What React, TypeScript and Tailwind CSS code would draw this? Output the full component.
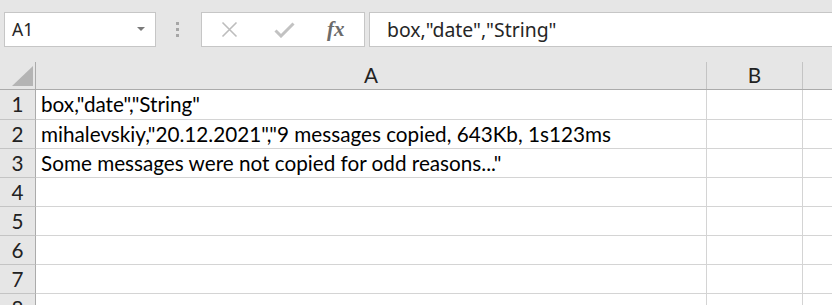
import React from "react";

// ─── Data ─────────────────────────────────────────────────────────────────────

const rows: { n: number; a: string }[] = [
    { n: 1, a: 'box,"date","String"' },
    { n: 2, a: 'mihalevskiy,"20.12.2021","9 messages copied, 643Kb, 1s123ms' },
    { n: 3, a: 'Some messages were not copied for odd reasons..."' },
    { n: 4, a: "" },
    { n: 5, a: "" },
    { n: 6, a: "" },
    { n: 7, a: "" },
    { n: 8, a: "" },
];

const cellFont = { fontFamily: "Lato, 'Liberation Sans', sans-serif" };

// ─── Formula bar ──────────────────────────────────────────────────────────────

function FormulaBar() {
    return (
        <div className="flex h-[62px] shrink-0 items-start pt-[12px] font-['Noto_Sans',sans-serif]">
            <div className="ml-[4px] flex h-[35px] w-[152px] items-center justify-between border border-[#c6c6c6] bg-white pl-[7px] pr-[10px]">
                <span className="text-[17.5px] text-[#262626]">A1</span>
                <svg width="8" height="5" viewBox="0 0 8 5">
                    <path d="M0 0h8L4 4z" fill="#7a7a7a" />
                </svg>
            </div>

            <div className="flex h-[35px] w-[45px] flex-col items-start justify-center gap-[3px] pl-[20px]">
                <div className="h-[3px] w-[3px] bg-[#a6a6a6]" />
                <div className="h-[3px] w-[3px] bg-[#a6a6a6]" />
                <div className="h-[3px] w-[3px] bg-[#a6a6a6]" />
            </div>

            <div className="flex h-[35px] w-[164px] items-center border border-[#c6c6c6] bg-white">
                <svg className="ml-[19px]" width="17" height="17" viewBox="0 0 17 17">
                    <path d="M1.5 1.5l14 14M15.5 1.5l-14 14" stroke="#bdbdbd" strokeWidth="1.6" />
                </svg>
                <svg className="ml-[36px]" width="21" height="16" viewBox="0 0 21 16">
                    <path d="M1.5 8.5l5.5 5.5L19.5 1.5" stroke="#c2c2c2" strokeWidth="3" fill="none" />
                </svg>
                <span className="ml-[32px] font-['Liberation_Serif',serif] text-[21px] font-bold italic leading-none text-[#6b6b6b]">
                    fx
                </span>
            </div>

            <div className="ml-[4px] flex h-[35px] flex-1 items-center border-y border-l border-[#c6c6c6] bg-white pl-[17px]">
                <span className="text-[19.4px] text-[#262626]">box,"date","String"</span>
            </div>
        </div>
    );
}

// ─── Grid ─────────────────────────────────────────────────────────────────────

function ColumnHeaders() {
    return (
        <div className="flex h-[28px] shrink-0 border-b border-[#ababab]" style={cellFont}>
            <div className="relative w-[36px] shrink-0 border-r border-[#ababab]">
                <svg className="absolute left-[12px] top-[4px]" width="21" height="20" viewBox="0 0 21 20">
                    <path d="M21 0V20H0z" fill="#b4b4b4" />
                </svg>
            </div>
            <div className="flex w-[671px] shrink-0 items-center justify-center border-r border-[#c4c4c4] text-[20.7px] text-[#222]">
                A
            </div>
            <div className="flex w-[96px] shrink-0 items-center justify-center border-r border-[#c4c4c4] text-[20.7px] text-[#222]">
                B
            </div>
            <div className="flex-1" />
        </div>
    );
}

function Row({ n, a }: { n: number; a: string }) {
    const h = n === 1 ? "h-[30px]" : "h-[29px]";
    return (
        <div className={`flex ${h} shrink-0`} style={cellFont}>
            <div className="flex w-[36px] shrink-0 items-center justify-center border-r border-b border-r-[#ababab] border-b-[#c4c4c4] bg-[#e6e6e6] pt-[1px] text-[20.7px] text-[#222]">
                {n}
            </div>
            <div className="flex w-[671px] shrink-0 items-center whitespace-nowrap border-r border-b border-[#d4d4d4] bg-white pl-[5px] pt-[1px] text-[20.7px] text-black">
                {a}
            </div>
            <div className="w-[96px] shrink-0 border-r border-b border-[#d4d4d4] bg-white" />
            <div className="flex-1 border-b border-[#d4d4d4] bg-white" />
        </div>
    );
}

export default function App() {
    return (
        <div className="flex h-[305px] w-[832px] flex-col overflow-hidden bg-[#e6e6e6]">
            <FormulaBar />
            <ColumnHeaders />
            {rows.map((r) => (
                <Row key={r.n} n={r.n} a={r.a} />
            ))}
        </div>
    );
}
